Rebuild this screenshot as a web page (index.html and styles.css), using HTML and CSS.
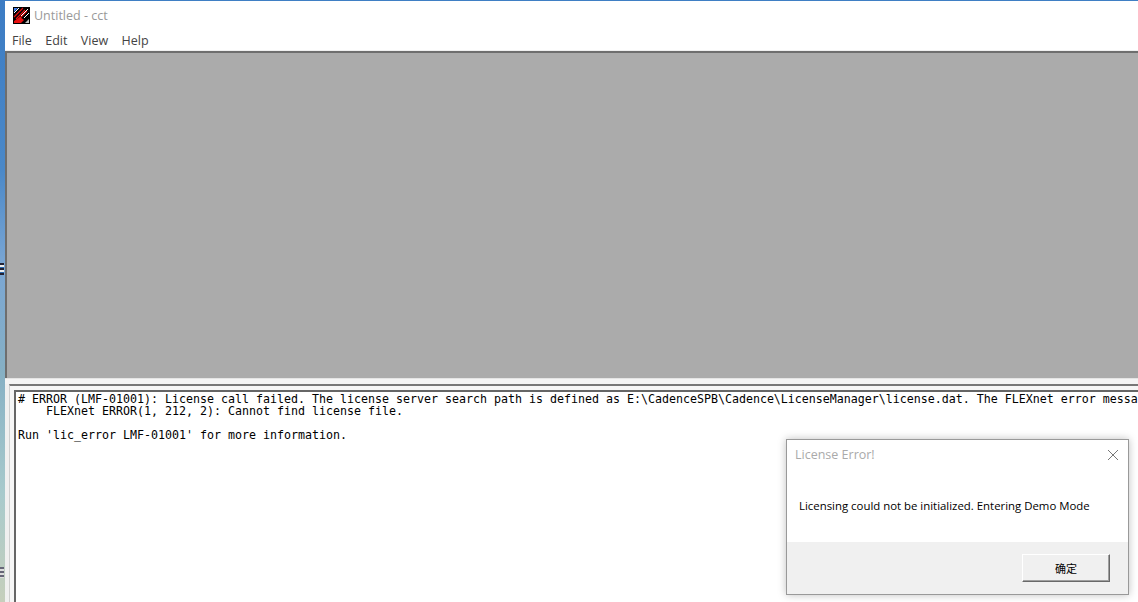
FILE: index.html
```html
<!DOCTYPE html>
<html lang="en">
<head>
<meta charset="utf-8">
<title>Untitled - cct</title>
<link rel="stylesheet" href="styles.css">
</head>
<body>
<div class="desktop">
  <div class="strip">
    <div class="tray tray-a"></div>
    <div class="tray tray-b"></div>
  </div>
  <div class="window">
    <header class="titlebar">
      <svg class="appicon" width="17" height="17" viewBox="0 0 17 17">
        <rect width="17" height="17" fill="#000"/>
        <path d="M1 1 H5 L1 5 Z" fill="#3a78e8"/>
        <path d="M1 6 L6 1" stroke="#fff" stroke-width="1"/>
        <path d="M1 10 L10 1 M3 12 L12 3 M4 14 L14 4" stroke="#e81010" stroke-width="1.2"/>
        <path d="M1 16 V14 L7 10 L11 13 L8 16 Z" fill="#e81010"/>
        <path d="M8 9 L15 2 M11 11 L16 6" stroke="#fff" stroke-width="1"/>
        <path d="M12 16 L16 12 V16 Z" fill="#c4c4c4"/>
      </svg>
      <span class="title">Untitled - cct</span>
    </header>
    <nav class="menubar">
      <span>File</span><span>Edit</span><span>View</span><span>Help</span>
    </nav>
    <main class="workspace"></main>
    <div class="splitter"></div>
    <section class="console">
      <pre class="log"># ERROR (LMF-01001): License call failed. The license server search path is defined as E:\CadenceSPB\Cadence\LicenseManager\license.dat. The FLEXnet error messa
    FLEXnet ERROR(1, 212, 2): Cannot find license file.

Run 'lic_error LMF-01001' for more information.</pre>
    </section>
  </div>
  <div class="dialog">
    <div class="dialog-title">
      <span>License Error!</span>
      <svg class="close" width="12" height="12" viewBox="0 0 12 12"><path d="M1 1 L11 11 M11 1 L1 11" stroke="#777" stroke-width="1" fill="none"/></svg>
    </div>
    <div class="dialog-body">Licensing could not be initialized. Entering Demo Mode</div>
    <div class="dialog-foot"><button class="ok">确定</button></div>
  </div>
</div>
</body>
</html>
```
FILE: styles.css
```css
* { box-sizing: border-box; }
html, body { margin: 0; height: 100%; overflow: hidden; }
.desktop { position: relative; display: flex; width: 1138px; height: 602px; font-family: "Open Sans", "Noto Sans", sans-serif; }
.strip { position: relative; width: 5px; background: linear-gradient(#3c7cc4 0, #4a88c8 28%, #7aa6d4 44%, #86b0c4 62%, #a8cacc 82%, #c6cfbc 100%); }
.tray { position: absolute; left: 0; width: 4px; background: repeating-linear-gradient(#223 0 2px, #eee 2px 4px, #2a6ab0 4px 5px); }
.tray-a { top: 263px; height: 12px; }
.tray-b { top: 567px; height: 11px; background: repeating-linear-gradient(#667 0 2px, #ddd 2px 4px); }
.window { flex: 1; display: flex; flex-direction: column; min-width: 0; background: #f0f0f0; }
.titlebar { height: 30px; background: #fff; display: flex; align-items: center; padding-left: 8px; border-top: 1px solid #3f7fc4; }
.appicon { margin-right: 4px; }
.title { font-size: 12.5px; color: #999; }
.menubar { height: 20px; background: #fff; display: flex; gap: 13.4px; padding: 1px 0 0 7px; font-size: 12.5px; color: #444; line-height: 20px; }
.workspace { height: 327px; background: #ababab; border-top: 2px solid #6e6e6e; border-left: 2px solid #6e6e6e; margin-top: 1px; }
.splitter { height: 6px; background: #f4f4f4; border-top: 1px solid #e4e4e4; }
.console { flex: 1; min-height: 0; margin-left: 4px; padding: 4px 0 0 4px; border-top: 2px solid #777; border-left: 1px solid #d0d0d0; background: #f6f6f6; }
.log { margin: 0; height: 100%; background: #fff; border-top: 2px solid #666; border-left: 2px solid #666; padding: 1px 0 0 2px; font-family: "DejaVu Sans Mono", monospace; font-size: 11.63px; line-height: 12px; color: #000; overflow: hidden; white-space: pre; }
.dialog { position: absolute; left: 786px; top: 439px; width: 343px; height: 156px; background: #fff; border: 1px solid #999; box-shadow: 0 0 8px rgba(0,0,0,.25); display: flex; flex-direction: column; font-size: 11.4px; }
.dialog-title { height: 29px; display: flex; align-items: center; justify-content: space-between; padding: 0 9px 0 8px; color: #aaa; font-size: 12.5px; }
.dialog-body { flex: 1; padding: 29px 0 0 12px; color: #000; }
.dialog-foot { height: 52px; background: #f0f0f0; display: flex; align-items: center; justify-content: flex-end; padding: 0 18px 0 0; }
.ok { width: 88px; height: 28px; background: #f0f0f0; border: 1px solid; border-color: #fff #696969 #696969 #fff; box-shadow: inset -1px -1px 0 #a0a0a0; font-family: "Noto Sans CJK SC", sans-serif; font-size: 11px; color: #000; padding: 0; }
```
